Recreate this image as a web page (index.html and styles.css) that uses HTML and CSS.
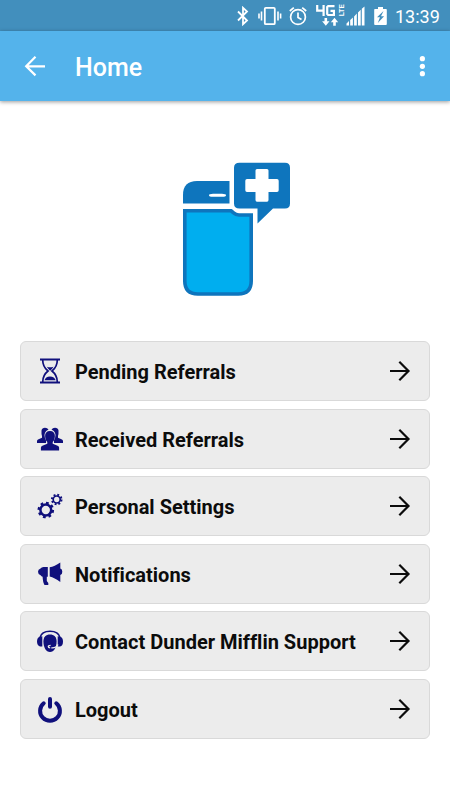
FILE: index.html
```html
<!DOCTYPE html>
<html lang="en">
<head>
<meta charset="utf-8">
<title>Home</title>
<link rel="stylesheet" href="styles.css">
</head>
<body>
<div class="status">
  <svg class="bluetooth" width="12" height="20" viewBox="0 0 12 20"><path d="M1 5.500L10 14.500 6 18.200V1.800L10 5.500 1 14.500" fill="none" stroke="#fff" stroke-width="1.800"/></svg>
  <svg class="vibrate" width="24" height="20" viewBox="0 0 24 20"><rect x="6.800" y="1.800" width="10" height="16.400" rx="1" fill="none" stroke="#fff" stroke-width="1.800"/><path d="M3.500 5.500v9M1 7.500v5M20 5.500v9M22.600 7.500v5" stroke="#fff" stroke-width="1.600"/></svg>
  <svg class="alarm" width="18" height="20" viewBox="0 0 18 20"><g fill="none" stroke="#fff" stroke-width="1.700"><circle cx="9" cy="11" r="7.400"/><path d="M9 6.500v4.900l3.500 2.100M.8 5l4-3.400M17.200 5l-4-3.400"/></g></svg>
  <svg class="network" width="29" height="23" viewBox="0 0 29 23"><path d="M1.200 1v5.700h7.500M7.600 1v11" fill="none" stroke="#fff" stroke-width="2.200"/><path d="M18.500 2.100H12.200L11.200 3v7l1 1h5.700V6.800H14.500" fill="none" stroke="#fff" stroke-width="2.200"/><text class="lte" transform="translate(27.500 12.300) rotate(-90)" textLength="12" lengthAdjust="spacingAndGlyphs">LTE</text><path d="M8.500 14h2.600v3.300h2.400L9.800 21.700l-3.700-4.400h2.400zM17.200 21.700h2.600v-3.500h2.400L18.500 13.800l-3.700 4.400h2.400z" fill="#fff"/></svg>
  <svg class="signal" width="19" height="20" viewBox="0 0 19 20"><path d="M.5 17.500L3 15v4.500H.5zM4.200 14L6.900 11.500v8H4.200zM8.100 10.500L10.800 7.500v12H8.100zM12 6.500l2.700-2.700v15.700H12zM15.800 2.800L18.500 .5v19h-2.700z" fill="#fff"/></svg>
  <svg class="battery" width="13" height="20" viewBox="0 0 13 20"><path d="M4 1h5v2h3q.8 0 .8.800V18q0 1-.8 1H1q-.8 0-.8-1V3.800Q.2 3 1 3h3z" fill="#fff"/><path d="M9.500 5L3 11.200h3L3.800 17l6.300-6.800H7z" fill="#428fbd"/></svg>
  <span class="time">13:39</span>
</div>
<header class="appbar">
  <svg width="22" height="22" viewBox="0 0 22 22"><path d="M21 11.300H2.500M11.500 1.800L2.200 11.200l9.300 9.200" fill="none" stroke="#fff" stroke-width="2.200"/></svg>
  <h1>Home</h1>
  <svg class="more" width="6" height="22" viewBox="0 0 6 22"><g fill="#fff"><circle cx="3.400" cy="3.700" r="2.600"/><circle cx="3.400" cy="11.300" r="2.600"/><circle cx="3.400" cy="18.700" r="2.600"/></g></svg>
</header>
<main>
  <svg class="logo" width="110" height="135" viewBox="182 162 110 135">
    <path d="M229.500 181v22.500H183V195q0-14 14-14z" fill="#0e75bd"/>
    <rect x="209" y="193.700" width="17" height="3" rx="4" ry="1.500" fill="#fff"/>
    <path d="M184.800 210.800H231c3 2 4 4.200 8 4.200h12.200v66q0 13-13 13h-40.400q-13 0-13-13z" fill="#00aeef" stroke="#0e75bd" stroke-width="3.600"/>
    <path d="M239.500 162.800H285q5 0 5 5V203.500q0 5-5 5H273L257.500 223.500V208.500H239.500q-5.500 0-5.500-5V167.800q0-5 5.500-5z" fill="#0e75bd"/>
    <path d="M257 169h10q1.500 0 1.500 1.500v8.500h8.500q1.700 0 1.700 1.700v9.600q0 1.700-1.700 1.700h-8.500v8q0 1.700-1.500 1.700h-10q-1.500 0-1.500-1.700v-8H247q-1.700 0-1.700-1.700v-9.600q0-1.700 1.700-1.700h8.500v-8.500q0-1.500 1.500-1.500z" fill="#fff"/>
  </svg>
  <nav>
    <a class="item">
      <svg class="icon" viewBox="0 0 28 28"><path d="M4 2.500h20M4 25.500h20" stroke="#10107c" stroke-width="1.900"/><path d="M6.700 3c0 5.500 1.800 8.200 5.300 11-3.500 2.800-5.300 5.500-5.300 11M21.300 3c0 5.500-1.800 8.200-5.300 11 3.500 2.800 5.300 5.500 5.300 11" fill="none" stroke="#10107c" stroke-width="1.700"/><path d="M10.800 9.800q3 1 6.700 0Q16 12.200 14.200 13.800 12.200 12 10.800 9.800zM8.500 23.300q1-3.500 5.500-3.800 4.500.3 5.700 3.800z"/></svg>
      <span>Pending Referrals</span>
      <svg class="arrow" viewBox="0 0 22 22"><path d="M1 11h18.500M10.300 1.800l9.200 9.200-9.200 9.200"/></svg>
    </a>
    <a class="item">
      <svg class="icon" viewBox="0 0 28 28"><path d="M1 18v-2q0-1 1-1.500l4-1.800V11Q5.300 9 5.500 5.500 6 2.800 9 2.800q2.500 0 3.500 2Q8.800 6 8.500 10q.2 3.500 1.500 5.500V18zM27 18v-2q0-1-1-1.500l-4-1.800V11q.7-2 .5-5.500Q22 2.800 19 2.800q-2.500 0-3.500 2 3.700 1.200 4 5.200-.2 3.500-1.500 5.500V18z"/><path d="M14 6c3.300 0 5 2 4.900 5-.1 3-.9 4.700-2.200 6v1.800l4.900 2q1.500.7 1.500 2V25.500H4.900v-2.700q0-1.300 1.500-2l4.900-2V17c-1.300-1.300-2.100-3-2.200-6C9 8 10.700 6 14 6z"/></svg>
      <span>Received Referrals</span>
      <svg class="arrow" viewBox="0 0 22 22"><path d="M1 11h18.500M10.300 1.800l9.200 9.200-9.200 9.200"/></svg>
    </a>
    <a class="item">
      <svg class="icon" viewBox="0 0 28 28"><g fill="none" stroke="#10107c"><circle cx="9.800" cy="18" r="5.400" stroke-width="2.500"/><circle cx="9.800" cy="18" r="7" stroke-width="2.600" stroke-dasharray="2.700 2.798"/><circle cx="20.700" cy="7.500" r="3.500" stroke-width="1.700"/><circle cx="20.700" cy="7.500" r="4.800" stroke-width="2" stroke-dasharray="1.870 1.900"/></g></svg>
      <span>Personal Settings</span>
      <svg class="arrow" viewBox="0 0 22 22"><path d="M1 11h18.500M10.300 1.800l9.200 9.200-9.200 9.200"/></svg>
    </a>
    <a class="item">
      <svg class="icon" viewBox="0 0 28 28"><path d="M11.800 6.900v9.800h-1v4.200l1.500 2v2H8.500q-1.600-2.300-1.900-8.200-1.300 0-2-1.400Q2 14.500 2 11.800q0-2.500 2.500-3.400 1-1.500 3-1.500zM13.700 7.200Q18.500 6.500 24.300 2.400v6q2 .4 2 3.300t-2 3.300v7Q18.500 17.500 13.700 16.500z"/></svg>
      <span>Notifications</span>
      <svg class="arrow" viewBox="0 0 22 22"><path d="M1 11h18.500M10.300 1.800l9.200 9.200-9.200 9.200"/></svg>
    </a>
    <a class="item">
      <svg class="icon" viewBox="0 0 28 28"><path d="M4 10.500C5 6.300 8.500 4.200 14 4.200S23 6.300 24 10.500" fill="none" stroke="#10107c" stroke-width="1.600"/><path d="M6.300 9.300v10.200H4Q1 18.500 1 14.500t3-4.800zM21.700 9.300v10.200H24q3-.7 3-5t-3-4.800z"/><path d="M14 7.500c4 0 6.600 2.600 6.600 7 0 5.700-2.600 10.500-6.600 10.500s-6.600-4.800-6.600-10.500c0-4.400 2.600-7 6.600-7z"/><path d="M22 17.500q-1.700 3.700-6.700 3.300M14.200 20.900q-1.900 0-1.900-1.300t2.300-1.300" fill="none" stroke="#ececec" stroke-width="1.300"/></svg>
      <span>Contact Dunder Mifflin Support</span>
      <svg class="arrow" viewBox="0 0 22 22"><path d="M1 11h18.500M10.300 1.800l9.200 9.200-9.200 9.200"/></svg>
    </a>
    <a class="item">
      <svg class="icon" viewBox="0 0 28 28"><path d="M7.700 8.300a9.900 9.900 0 1 0 12.600 0M14 4v7.700" fill="none" stroke="#10107c" stroke-width="4" stroke-linecap="round"/></svg>
      <span>Logout</span>
      <svg class="arrow" viewBox="0 0 22 22"><path d="M1 11h18.500M10.300 1.800l9.200 9.200-9.200 9.200"/></svg>
    </a>
  </nav>
</main>
</body>
</html>
```
FILE: styles.css
```css
* { box-sizing: border-box; }
body {
  margin: 0;
  width: 450px;
  height: 800px;
  overflow: hidden;
  background: #fff;
  font-family: Roboto, sans-serif;
  color: #0c0c0c;
}
svg { display: block; flex: none; }
.status {
  height: 31px;
  background: #428fbd;
  color: #fff;
  display: flex;
  align-items: center;
  justify-content: flex-end;
  padding-right: 11px;
}
.vibrate { margin-left: 9px; }
.alarm { margin-left: 7px; }
.network { margin-left: 9px; }
.signal { margin-left: 1px; }
.battery { margin-left: 9px; }
.lte { font: bold 8px Roboto, sans-serif; fill: #fff; }
.time {
  margin-left: 8px;
  width: 44px;
  font-size: 18px;
  line-height: 31px;
  white-space: nowrap;
  padding-top: 1px;
}
.appbar {
  height: 70px;
  background: #54b3eb;
  color: #fff;
  display: flex;
  align-items: center;
  padding: 0 25px 0 24px;
  box-shadow: 0 1px 4px rgba(0, 0, 0, .4);
}
.appbar h1 {
  margin: 4px 0 0 29px;
  font-size: 25px;
  font-weight: 500;
  line-height: 30px;
}
.more { margin-left: auto; }
main { padding: 61px 20px 0; }
.logo { margin: 0 0 44.4px 162px; }
nav {
  display: flex;
  flex-direction: column;
  gap: 7.5px;
}
.item {
  height: 60px;
  display: flex;
  align-items: center;
  padding: 0 18px 0 15px;
  background: #ececec;
  border: 1px solid #d9d9d9;
  border-radius: 6px;
}
.icon {
  width: 28px;
  height: 28px;
  margin-right: 11px;
  fill: #10107c;
}
.item span {
  font-size: 20px;
  font-weight: 700;
  line-height: 24px;
  padding-top: 2px;
  white-space: nowrap;
  font-variant-ligatures: none;
}
.arrow {
  width: 22px;
  height: 22px;
  margin-left: auto;
  fill: none;
  stroke: #0c0c0c;
  stroke-width: 2.2;
}
```
